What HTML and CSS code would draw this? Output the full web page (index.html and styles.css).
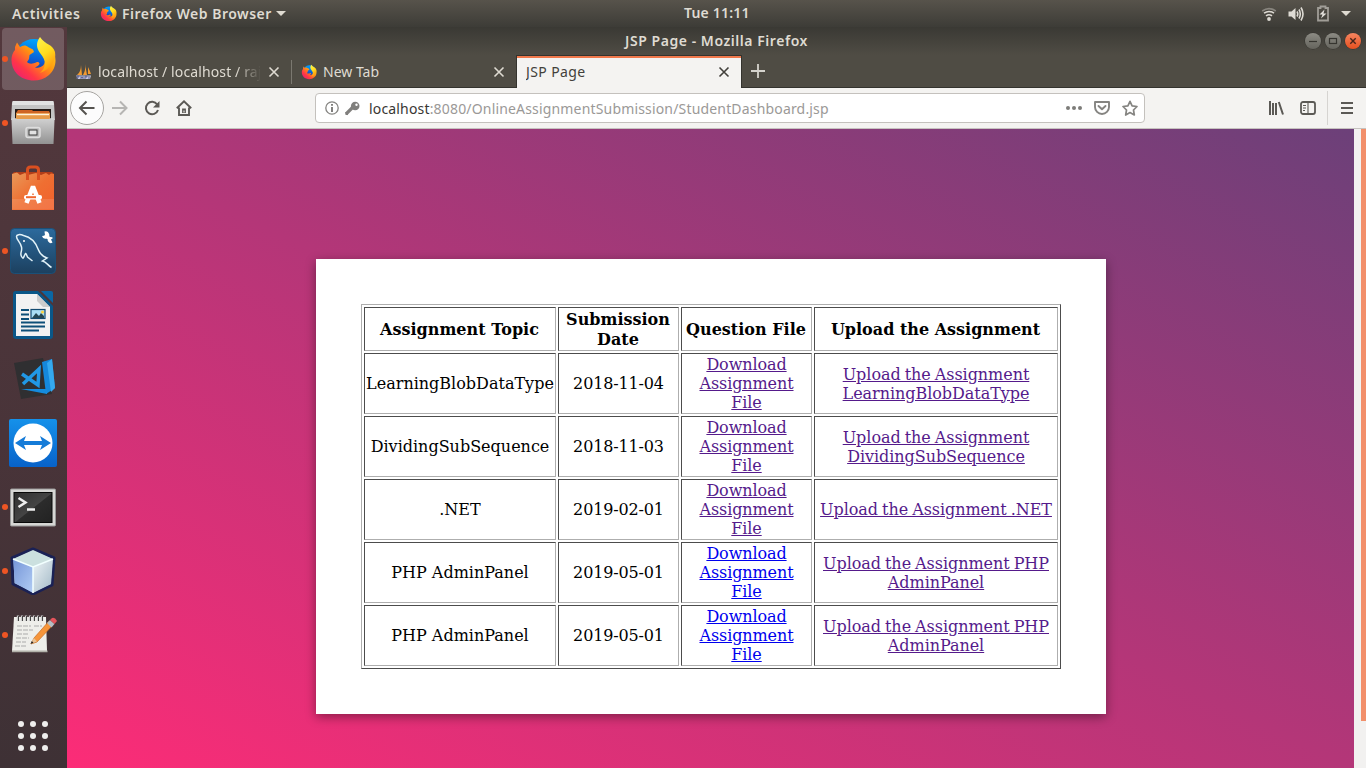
FILE: index.html
```html
<!DOCTYPE html>
<html lang="en">
<head>
<meta charset="utf-8">
<title>JSP Page</title>
<link rel="stylesheet" href="styles.css">
</head>
<body>
<svg class="defs" width="0" height="0" aria-hidden="true">
  <defs>
    <linearGradient id="fox" x1="1" y1="0" x2="0" y2="1"><stop offset="0" stop-color="#ffe226"/><stop offset=".4" stop-color="#ff980e"/><stop offset=".7" stop-color="#ff3647"/><stop offset="1" stop-color="#e31587"/></linearGradient>
    <linearGradient id="globe" x1="0.6" y1="0" x2="0.4" y2="1"><stop offset="0" stop-color="#00a8ff"/><stop offset=".55" stop-color="#0b5bd3"/><stop offset="1" stop-color="#362066"/></linearGradient>
    <linearGradient id="flame" x1="0" y1="0" x2="0.4" y2="1"><stop offset="0" stop-color="#fff44f"/><stop offset=".55" stop-color="#ffdc1e"/><stop offset="1" stop-color="#ff980e"/></linearGradient>
    <linearGradient id="metal" x1="0" y1="0" x2="0" y2="1"><stop offset="0" stop-color="#d2d2d2"/><stop offset="1" stop-color="#929292"/></linearGradient>
    <linearGradient id="bag" x1="0" y1="0" x2="1" y2="1"><stop offset="0" stop-color="#e9995a"/><stop offset=".5" stop-color="#ef6f32"/><stop offset="1" stop-color="#f2602c"/></linearGradient>
    <linearGradient id="sea" x1="0" y1="0" x2="0" y2="1"><stop offset="0" stop-color="#2c6a9d"/><stop offset="1" stop-color="#1c405f"/></linearGradient>
    <linearGradient id="team" x1="0" y1="0" x2="0" y2="1"><stop offset="0" stop-color="#1591ea"/><stop offset="1" stop-color="#0862c9"/></linearGradient>
    <linearGradient id="term" x1="0" y1="0" x2="1" y2="1"><stop offset="0" stop-color="#303030"/><stop offset=".5" stop-color="#444"/><stop offset=".52" stop-color="#2c2c2c"/><stop offset="1" stop-color="#222"/></linearGradient>
    <linearGradient id="cubeL" x1="0" y1="0" x2="1" y2="1"><stop offset="0" stop-color="#7595d8"/><stop offset="1" stop-color="#b2cdf4"/></linearGradient>
    <linearGradient id="cubeR" x1="0" y1="0" x2="1" y2="1"><stop offset="0" stop-color="#eef4f6"/><stop offset="1" stop-color="#a1b8c6"/></linearGradient>
    <symbol id="firefox" viewBox="0 0 48 48">
      <circle cx="25" cy="23.500" r="19.500" fill="url(#globe)"/>
      <path d="M6 12 8 7.500 11 12C14 10 17 10 19 12L24 14.500 25 17 20.500 20 20 24 18 27C20 29 23 29.500 28 27 32 27 31 30.500 26 32.500 33 34 37 29 36 23 35 15 38 9 41 12 49 20 48 33 40 40 31 48 16 47 8 39 1 32 1 20 6 15Z" fill="url(#fox)"/>
      <path d="M31 2C27 7 27 13 31 18 38 26 37 33 31 38 40 35 48 26 46 17 44 9 36 10 31 2Z" fill="url(#flame)"/>
    </symbol>
    <symbol id="close" viewBox="0 0 12 12"><path d="M1.500 1.500 10.500 10.500M10.500 1.500 1.500 10.500" stroke="currentColor" stroke-width="1.600" fill="none"/></symbol>
  </defs>
</svg>

<header class="panel">
  <span class="panel-activities">Activities</span>
  <svg class="panel-app-icon" width="17" height="17"><use href="#firefox"/></svg>
  <span class="panel-app">Firefox Web Browser</span>
  <i class="caret"></i>
  <span class="panel-clock">Tue 11:11</span>
  <div class="panel-status">
    <svg width="16" height="16" viewBox="0 0 16 16" fill="none" stroke="#dedbd4" stroke-width="1.600"><path d="M1.200 5Q8 .2 14.800 5" stroke="#88857e"/><path d="M3 7.200Q8 3.700 13 7.200M5 9.800Q8 7.700 11 9.800"/><circle cx="8" cy="13" r="1.900" fill="#dedbd4" stroke="none"/></svg>
    <svg width="17" height="16" viewBox="0 0 17 16" fill="none" stroke="#dedbd4" stroke-width="1.600"><path d="M.5 5.500h3L7.500 2v12L3.500 10.500h-3Z" fill="#dedbd4" stroke="none"/><path d="M9 5.500Q10.500 8 9 10.500M11 3.500Q13.600 8 11 12.500M13 1.500Q17 8 13 14.500"/></svg>
    <svg width="14" height="17" viewBox="0 0 14 17"><path d="M2 3h2.500V1.500h5V3H12v12.500H2Z" fill="none" stroke="#a09d97" stroke-width="1.800"/><path d="M8.500 4.500 3.500 9.500H6.500L5 13.500 10.500 8.500H7.500Z" fill="#e4e1dc"/></svg>
    <i class="caret"></i>
  </div>
</header>

<div class="desktop">
  <nav class="dock">
    <div class="dock-item running active"><svg width="48" height="48"><use href="#firefox"/></svg></div>
    <div class="dock-item running"><svg width="48" height="48" viewBox="0 0 48 48">
      <path d="M4 2h40q1 0 1 2l1 17H2L3 4q0-2 1-2Z" fill="#c4c4c4"/><path d="M4 2h40l1 4H3Z" fill="#e2e2e2"/><path d="M6 10h36v13H6Z" fill="#251c18"/><path d="M7 14 9 11h14l1 1h16l1 2v8H7Z" fill="#cf6424"/><path d="M7 14h34v7H7Z" fill="#e79b49"/><path d="M8 15.500h32" stroke="#fff3de" stroke-width="1.400"/><path d="M2.500 21q0-2 2-2H6l2 1h32l2-1h1.500q2 0 2 2L44.500 45h-41Z" fill="url(#metal)"/><rect x="17" y="28.500" width="14" height="10" rx="2" fill="#bbb" stroke="#dedede" stroke-width="1.500"/><rect x="20" y="31" width="8" height="5" fill="#e2e2e2" stroke="#3b3b3b"/></svg></div>
    <div class="dock-item"><svg class="up" width="48" height="48" viewBox="0 0 48 48">
      <path d="M3 11 5 9h38l2 2v4H3Z" fill="#b23d18"/><path d="M3 11 8 9.500l3 2.500 5-2 3 2 8-2 5 2 5-2 3 2 2-1.500 3 .5v36H3Z" fill="url(#bag)"/><path d="M3 36h42v10.500H3Z" fill="#fff" opacity=".12"/><path d="M18.500 17V7q0-3 3-3h5q3 0 3 3v10" fill="none" stroke="#d94f20" stroke-width="3"/><path d="M17.500 40 24 23.500 30.500 40" fill="none" stroke="#fff" stroke-width="4.500" stroke-linejoin="bevel"/><rect x="15" y="32" width="18" height="4.500" rx="2" fill="#fff"/><path d="M17 34.200h10" stroke="#f0662f" stroke-width="2"/></svg></div>
    <div class="dock-item running"><svg class="up" width="48" height="48" viewBox="0 0 48 48">
      <rect x="1.500" y="1.500" width="45" height="45" rx="4" fill="url(#sea)" stroke="#1b5078"/><path d="M23.500 34 18.500 30C17.500 28 17.500 26.500 16.500 26.500 14 31 14.500 33 12.500 29.500 10.500 26 13.500 24.500 12.500 20 11.500 15 7.500 13 7.500 9.500 7.500 7.500 11 7 14.500 8.500 22 10 27 16 29.500 23 30.500 26 32.500 29 38 31L33.500 34C37.500 35 38.500 38 42.500 40.500" fill="none" stroke="#e2f2f8" stroke-width="1.500"/><circle cx="15" cy="14" r="1" fill="#fff"/><path d="m36 8 5.500 4.500" stroke="#fff" stroke-width="3.500"/><path d="M35.500 4.500A3.700 3.700 0 1 1 33 9l3-.5ZM43.500 15.500A3 3 0 1 1 44 11l-2 1.500Z" fill="#fff"/></svg></div>
    <div class="dock-item"><svg width="48" height="48" viewBox="0 0 48 48">
      <path d="M6.500 0H29L44 15V45q0 3-3 3H7.500Q4 48 4 45V3q0-3 2.500-3Z" fill="#0a5788"/><path d="M32 0h10q2 0 2 2v10Z" fill="#0b67a4"/><path d="M7 3h21l13 13v29H7Z" fill="#f2f2f2"/><path d="M28 3 41 16h-7l-6-6Z" fill="#ccc"/><path d="M12 19h8M12 23.500h8M12 28h8M12 31.500h24M12 35.500h24M12 39.500h18" stroke="#0d4f78" stroke-width="2"/><rect x="22" y="18.500" width="14" height="9" fill="#a9ddf4" stroke="#134a70" stroke-width="1.200"/><path d="m23 27 4-5 3 3 2-3 3 3v2Z" fill="#244653"/><circle cx="33.500" cy="21" r="1.500" fill="#ffd33b"/></svg></div>
    <div class="dock-item"><svg width="48" height="48" viewBox="0 0 48 48">
      <path d="M5 8 34 3l9 36-31 5Z" fill="#2f2f31"/><path d="m33 7 10-3 3 29-9 6Z" fill="#1588dc"/><path d="m43 4 3 29-4 4-4-29Z" fill="#35a9ef"/><path d="m12 34 26 0v5Z" fill="#158bdd"/><path d="m13 19 16 11 1-16-16 15" fill="none" stroke="#2198e5" stroke-width="3.500"/></svg></div>
    <div class="dock-item"><svg width="48" height="48" viewBox="0 0 48 48">
      <rect width="48" height="48" rx="2" fill="url(#team)"/><circle cx="24" cy="24" r="19.500" fill="#fff"/><path d="m6 24 11-7-2 5h18l-2-5 11 7-11 7 2-5H15l2 5Z" fill="#147bd8"/></svg></div>
    <div class="dock-item running"><svg width="48" height="48" viewBox="0 0 48 48">
      <rect x="1.500" y="6" width="45" height="37" rx="1" fill="#d6d6d4" stroke="#999"/><rect x="5" y="9.500" width="38" height="30" fill="url(#term)" stroke="#080808"/><path d="m9.500 15 7 4.500-7 4.500M18 26.500h8" fill="none" stroke="#eee" stroke-width="2.500"/></svg></div>
    <div class="dock-item running"><svg width="48" height="48" viewBox="0 0 48 48">
      <path d="m24 2 21 9-2 27-19 9-20-10L3 11Z" fill="#a9c4e2" stroke="#1a2155" stroke-width="3" stroke-linejoin="round"/><path d="m4 12 20-9 20 9-20 8Z" fill="#cbe0df"/><path d="m4 12 20 8v26L6 36Z" fill="url(#cubeL)"/><path d="m44 12-20 8v26l18-9Z" fill="url(#cubeR)"/><path d="m4 12 20 8 20-8M24 20v26" fill="none" stroke="#f2ffff" stroke-width="1.500"/></svg></div>
    <div class="dock-item running"><svg width="48" height="48" viewBox="0 0 48 48">
      <path d="M5 6h32l1 34H3Z" fill="#eeeeea"/><path d="M3 39.500h35.500v1.800H3Z" fill="#b2b2aa"/><path d="M9 4.500v5.500M13 4.500v5.500M17 4.500v5.500M21 4.500v5.500M25 4.500v5.500M29 4.500v5.500M33 4.500v5.500" stroke="#ccc" stroke-width="2.400"/><path d="M9.500 5v5M13.500 5v5M17.500 5v5M21.500 5v5M25.500 5v5M29.500 5v5M33.500 5v5" stroke="#444" stroke-width="1"/><path d="M8 15h14M25 15h8M8 19h16M8 23h12M7 27h13M7 31h10M6 35h12" stroke="#aaa" stroke-dasharray="5 1"/><path d="m25 27 15-17 4 4-16 17-6 2Z" fill="#f6953a" stroke="#c46b22" stroke-width=".7"/><path d="m21.500 33 3.500-6 3 3.500Z" fill="#e8c397"/><path d="m21.500 33 1.300-3 1.700 1.700Z" fill="#222"/><path d="m38 12 3-3 4.500 4-3 3.500Z" fill="#b5bdc4"/><path d="m41 9 2-2q3-1 5 3l-2.500 3Z" fill="#e4545c"/></svg></div>
    <div class="dock-apps"><i></i><i></i><i></i><i></i><i></i><i></i><i></i><i></i><i></i></div>
  </nav>

  <section class="window">
    <div class="titlebar">
      <span class="title">JSP Page - Mozilla Firefox</span>
      <div class="window-buttons">
        <i class="win-btn"><svg width="16" height="16"><path d="M4 8.500h8" stroke="#363530" stroke-width="1.200"/></svg></i>
        <i class="win-btn"><svg width="16" height="16"><rect x="4.500" y="5.500" width="7" height="5" fill="none" stroke="#363530" stroke-width="1.200"/></svg></i>
        <i class="win-btn win-close"><svg width="16" height="16"><path d="m5.300 5.300 5.400 5.400m0-5.400-5.400 5.400" stroke="#47241a" stroke-width="1.400"/></svg></i>
      </div>
    </div>
    <div class="tabs">
      <div class="tab tab-first">
        <svg width="16" height="16" viewBox="0 0 16 16"><path d="M5 1Q5 8 1 11h5ZM9 0q1 6-2 11h4ZM12 3q2 4 3 7h-3Z" fill="#f29a31"/><path d="M0 11.500h15L14 15H2Z" fill="#c4c5df"/><path d="M1 15v-3h2v1H1M5 15v-3m0 1.500h2M7 15v-3M9 15v-3h2v1H9m4 2v-3" stroke="#626691" fill="none"/></svg>
        <span class="tab-label faded">localhost / localhost / raj</span>
        <svg class="tab-close" width="12" height="12"><use href="#close"/></svg>
      </div>
      <div class="tab tab-second">
        <svg width="16" height="16"><use href="#firefox"/></svg>
        <span class="tab-label">New Tab</span>
        <svg class="tab-close" width="12" height="12"><use href="#close"/></svg>
      </div>
      <div class="tab tab-active">
        <span class="tab-label">JSP Page</span>
        <svg class="tab-close" width="12" height="12"><use href="#close"/></svg>
      </div>
      <svg class="tab-new" width="14" height="14"><path d="M7 0v14M0 7h14" stroke="#d5d3cd" stroke-width="1.800"/></svg>
    </div>
    <div class="toolbar">
      <span class="back"><svg width="18" height="16" viewBox="0 0 18 16"><path d="M16.500 8H2M8.500 1.500 2 8l6.500 6.500" fill="none" stroke="#55534f" stroke-width="2"/></svg></span>
      <span class="tool tool-off"><svg width="16" height="16"><path d="M0 8h14.500M8 1.500 14.500 8 8 14.500" fill="none" stroke="#b6b5b3" stroke-width="2"/></svg></span>
      <span class="tool"><svg width="16" height="16"><path d="M13.200 4.500A6.200 6.200 0 1 0 14 10" fill="none" stroke="#5b5955" stroke-width="2"/><path d="M15.500 1v6.500H9Z" fill="#5b5955"/></svg></span>
      <span class="tool"><svg width="16" height="16" fill="none" stroke="#5b5955" stroke-width="1.900"><path d="M.8 8.300 8 1.300l7.200 7M3 7.500V15h10V7.500"/><path d="M8 8.500V13" stroke-width="3.800"/><path d="M8 10.500v2" stroke="#f3f2f1" stroke-width="1.100"/></svg></span>
      <div class="urlbar">
        <svg width="14" height="14"><circle cx="7" cy="7" r="6.200" fill="none" stroke="#858481" stroke-width="1.300"/><path d="M7 6v5M7 3v1.800" stroke="#737270" stroke-width="1.800"/></svg>
        <svg class="key" width="15" height="15"><path d="m1 13 7-7" stroke="#807f7d" stroke-width="3.200"/><circle cx="10.200" cy="5" r="4.300" fill="#807f7d"/><circle cx="11.500" cy="3.700" r="1.200" fill="#fff"/><path d="M3 11v3H.5V11Z" fill="#807f7d"/></svg>
        <span class="url"><b>localhost</b>:8080/OnlineAssignmentSubmission/StudentDashboard.jsp</span>
        <div class="url-actions">
          <svg width="16" height="16" fill="#7d7c79"><circle cx="2" cy="8" r="2"/><circle cx="8" cy="8" r="2"/><circle cx="14" cy="8" r="2"/></svg>
          <svg width="16" height="16" fill="none" stroke="#858481" stroke-width="1.900" stroke-linejoin="round"><path d="M1 2h14v5a7 7 0 0 1-14 0Z"/><path d="m4.500 6 3.500 3.300L11.500 6" stroke-linecap="round"/></svg>
          <svg width="16" height="16"><path d="m8 1.300 2.100 4.500 4.900.7-3.500 3.500.8 5L8 12.600 3.700 15l.8-5L1 6.500l4.900-.7Z" fill="none" stroke="#858481" stroke-width="1.700" stroke-linejoin="round"/></svg>
        </div>
      </div>
      <div class="tools-right">
        <span class="tool"><svg width="16" height="16" stroke="#5b5955" stroke-width="2"><path d="M2 1v14M5 3v12M8 3v12M10.800 2l4.200 12.500"/></svg></span>
        <span class="tool"><svg width="16" height="16" fill="none" stroke="#5b5955" stroke-width="1.800"><rect x="1" y="2" width="14" height="12" rx="2"/><path d="M8 2v12M3 5.500h3M3 8h3M3 10.500h2" stroke-width="1.100"/></svg></span>
        <span class="menu-btn"><svg width="12" height="12"><path d="M0 1h12M0 6h12M0 11h12" stroke="#5b5955" stroke-width="2"/></svg></span>
      </div>
    </div>
    <div class="viewport">
      <main class="page">
        <div class="card">
          <table class="assignments">
            <colgroup><col class="c-topic"><col class="c-date"><col class="c-file"><col class="c-upload"></colgroup>
            <tr class="head"><th>Assignment Topic</th><th>Submission Date</th><th>Question File</th><th>Upload the Assignment</th></tr>
            <tr><td>LearningBlobDataType</td><td>2018-11-04</td><td><a class="seen" href="#">Download Assignment File</a></td><td><a class="seen" href="#">Upload the Assignment LearningBlobDataType</a></td></tr>
            <tr><td>DividingSubSequence</td><td>2018-11-03</td><td><a class="seen" href="#">Download Assignment File</a></td><td><a class="seen" href="#">Upload the Assignment DividingSubSequence</a></td></tr>
            <tr><td>.NET</td><td>2019-02-01</td><td><a class="seen" href="#">Download Assignment File</a></td><td><a class="seen" href="#">Upload the Assignment .NET</a></td></tr>
            <tr><td>PHP AdminPanel</td><td>2019-05-01</td><td><a class="fresh" href="#">Download Assignment File</a></td><td><a class="seen" href="#">Upload the Assignment PHP AdminPanel</a></td></tr>
            <tr><td>PHP AdminPanel</td><td>2019-05-01</td><td><a class="fresh" href="#">Download Assignment File</a></td><td><a class="seen" href="#">Upload the Assignment PHP AdminPanel</a></td></tr>
          </table>
        </div>
      </main>
      <div class="scrollbar"><i class="thumb"></i></div>
    </div>
  </section>
</div>
</body>
</html>
```
FILE: styles.css
```css
* { box-sizing: border-box; }
body {
  margin: 0;
  width: 1366px;
  height: 768px;
  overflow: hidden;
  display: flex;
  flex-direction: column;
  font-family: "Noto Sans", "Open Sans", sans-serif;
  font-size: 14px;
}
.defs { position: absolute; }
svg { display: block; flex: none; }

/* Top panel */
.panel {
  position: relative;
  flex: none;
  height: 27px;
  display: flex;
  align-items: center;
  padding: 0 15px 0 12px;
  background: linear-gradient(#57534b, #3d3c37);
  color: #dfdbd2;
  font-weight: 600;
  white-space: nowrap;
}
.panel-activities { width: 88px; letter-spacing: .6px; }
.panel-app-icon { margin-right: 5px; }
.panel-app { width: 154px; letter-spacing: .5px; }
.caret {
  flex: none;
  border: 5px solid transparent;
  border-top-color: #dfdbd2;
  border-bottom: 0;
}
.panel-clock { position: absolute; left: 684px; top: 3px; letter-spacing: .2px; }
.panel-status { margin-left: auto; display: flex; align-items: center; gap: 11px; }

.desktop { flex: 1; display: flex; min-height: 0; }

/* Dock */
.dock {
  flex: none;
  width: 67px;
  display: flex;
  flex-direction: column;
  background: linear-gradient(#53383d, #493439 55%, #3e3135);
}
.dock-item {
  position: relative;
  height: 64px;
  display: flex;
  align-items: center;
  justify-content: center;
  padding-right: 1px;
}
.dock-item svg { position: relative; }
.dock-item .up { margin-bottom: 1px; }
.dock-item.running::before {
  content: "";
  position: absolute;
  left: 2px;
  top: 29px;
  width: 6px;
  height: 6px;
  border-radius: 50%;
  background: #ee5524;
}
.dock-item.active::after {
  content: "";
  position: absolute;
  inset: 1px 3px 1px 2px;
  border-radius: 4px;
  background: rgba(255, 255, 255, .18);
}
.dock-item.active svg, .dock-item.running::before { z-index: 1; }
.dock-apps {
  margin: auto 0 17px 18px;
  display: grid;
  grid-template-columns: repeat(3, 6px);
  gap: 6px;
}
.dock-apps i { height: 6px; border-radius: 50%; background: #efeeed; }

/* Browser window */
.window { flex: 1; display: flex; flex-direction: column; min-width: 0; }
.titlebar {
  position: relative;
  flex: none;
  height: 28px;
  display: flex;
  align-items: center;
  justify-content: center;
  padding-bottom: 2px;
  background: linear-gradient(#3a3934, #4f4c44);
  color: #dfdbd2;
  font-weight: 600;
}
.title { letter-spacing: .55px; }
.window-buttons { position: absolute; right: 5px; top: 6px; display: flex; gap: 4px; }
.win-btn {
  width: 16px;
  height: 16px;
  border-radius: 50%;
  background: linear-gradient(#8c8b84, #65645d);
  box-shadow: 0 0 0 .5px #34332f;
}
.win-close { background: linear-gradient(#f58560, #e7501f); }

.tabs {
  flex: none;
  height: 33px;
  display: flex;
  align-items: stretch;
  background: #4f4c44;
  box-shadow: inset 0 -1px #34332e;
  color: #dfdbd2;
}
.tab {
  width: 225px;
  display: flex;
  align-items: center;
  padding: 0 12px 0 9px;
}
.tab-first { background: linear-gradient(#7b7870, #7b7870) right 5px / 1px 24px no-repeat; }
.tab-second { width: 224px; padding-right: 11px; }
.tab-label { margin-left: 6px; flex: 1; white-space: nowrap; overflow: hidden; }
.faded {
  letter-spacing: .12px;
  flex: 0 0 165px;
  mask-image: linear-gradient(90deg, #000 138px, transparent 163px);
}
.tab-close { margin-left: auto; }
.tab-active {
  width: 226px;
  padding: 0 11px 1px 9px;
  background: linear-gradient(#f0784b, #f0784b) 0 0 / 100% 2px no-repeat #f4f3f1;
  border: 1px solid #34332e;
  border-bottom: 0;
  color: #42403b;
}
.tab-active .tab-label { margin-left: 0; letter-spacing: .4px; }
.tab-new { margin: 9px 0 0 9px; }

.toolbar {
  flex: none;
  height: 41px;
  display: flex;
  align-items: center;
  padding-left: 3px;
  background: #f4f3f1;
  border-bottom: 1px solid #c6c2bf;
}
.back {
  width: 34px;
  height: 34px;
  display: grid;
  place-items: center;
  border: 1px solid #a6a4a1;
  border-radius: 50%;
  background: #fcfcfc;
}
.tool { width: 32px; display: flex; justify-content: center; }
.urlbar {
  width: 830px;
  height: 30px;
  margin-left: 115px;
  display: flex;
  align-items: center;
  padding: 0 6px 0 9px;
  background: #fff;
  border: 1px solid #c4c1bd;
  border-radius: 4px;
}
.key { margin: 0 9px 0 6px; }
.url { color: #9b9997; white-space: nowrap; letter-spacing: .17px; }
.url b { font-weight: 400; color: #393733; }
.url-actions { margin-left: auto; display: flex; gap: 12px; }
.tools-right { margin-left: auto; display: flex; align-items: center; }
.menu-btn {
  width: 39px;
  height: 34px;
  margin-left: 3px;
  display: flex;
  align-items: center;
  padding-left: 13px;
  border-left: 1px solid #d6d4d1;
}

/* Page */
.viewport { flex: 1; display: flex; min-height: 0; }
.page {
  flex: 1;
  padding: 130px 0 0 249px;
  overflow: hidden;
  background: linear-gradient(to top right, #fc2c77 0%, #6c4079 100%);
}
.card {
  width: 790px;
  height: 455px;
  padding: 45px;
  background: #fff;
  box-shadow: 0 3px 10px rgba(0, 0, 0, .4);
}
.assignments {
  width: 700px;
  table-layout: fixed;
  border: 1px solid;
  border-color: #aeaeae #4c4c4c #4c4c4c #aeaeae;
  border-spacing: 2px;
  font: 16px/19px "DejaVu Serif", serif;
  color: #000;
  text-align: center;
}
.assignments th, .assignments td {
  height: 61px;
  padding: 1px;
  border: 1px solid;
  border-color: #4c4c4c #aeaeae #aeaeae #4c4c4c;
}
.assignments th { height: 44px; padding: 2px 1px 0 0; line-height: 20px; }
.assignments td:nth-child(2) { letter-spacing: -.15px; }
.assignments td:nth-child(3) { letter-spacing: -.1px; }
.assignments td:nth-child(4) { letter-spacing: -.05px; word-spacing: -1px; }
.c-topic { width: 192px; }
.c-date { width: 121px; }
.c-file { width: 131px; }
.c-upload { width: 244px; }
.seen { color: #551a8b; }
.fresh { color: #0000ee; }
.scrollbar { width: 12px; background: #f2f1f0; }
.thumb { display: block; width: 5px; height: 592px; margin-left: 7px; background: #f28f6a; }
```
